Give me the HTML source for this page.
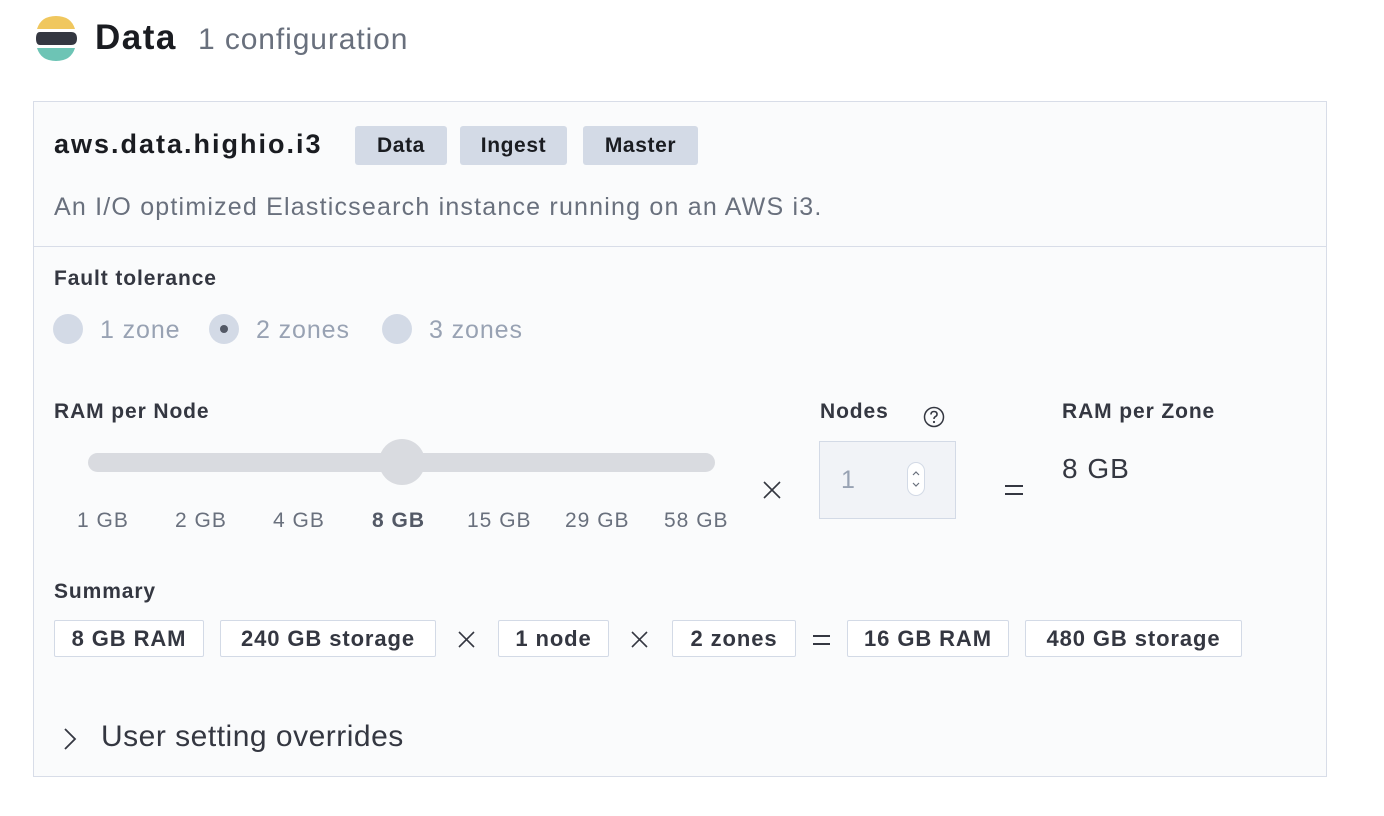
<!DOCTYPE html>
<html><head><meta charset="utf-8"><style>
body{margin:0;width:1384px;height:816px;background:#fff;font-family:"Liberation Sans",sans-serif;position:relative;overflow:hidden;color:#1a1c21}
.a{position:absolute;white-space:nowrap}
.card{position:absolute;left:33px;top:101px;width:1292px;height:674px;border:1px solid #d8dde8;background:#fafbfc}
.hd{position:absolute;left:33px;top:246px;width:1294px;height:1px;background:#d8dde8}
.bdg{position:absolute;top:126px;height:39px;background:#d3dae6;border-radius:3px;font-size:21px;letter-spacing:0.6px;font-weight:bold;line-height:39px;text-align:center;color:#1a1c21}
.rd{position:absolute;top:314px;width:30px;height:30px;border-radius:50%;background:#d3dae6}
.rt{position:absolute;top:315px;font-size:25px;letter-spacing:0.9px;line-height:30px;color:#98a2b3}
.lbl{position:absolute;font-size:21px;letter-spacing:0.9px;font-weight:bold;color:#343741}
.tk{position:absolute;top:509px;font-size:21px;letter-spacing:1px;color:#69707d}
.sb{position:absolute;top:620px;height:37px;border:1px solid #d3dae6;background:#fff;border-radius:2px;font-size:22px;letter-spacing:0.9px;font-weight:bold;line-height:35px;text-align:center;color:#343741;box-sizing:border-box}
.x{position:absolute}
</style></head><body>
<svg class="a" style="left:35px;top:15px" width="44" height="48" viewBox="0 0 44 48">
<path d="M2 14 Q6 1 21 1 Q36 1 40 14 Z" fill="#f0c75e"/>
<path d="M5 17 H36 Q42 17 42 23.5 Q42 30 36 30 H5 Q1 30 1 23.5 Q1 17 5 17Z" fill="#343741"/>
<path d="M2 33 H40 Q36 46 21 46 Q6 46 2 33Z" fill="#6dc4b5"/>
</svg>
<div class="a" style="left:95px;top:18px;font-size:35px;letter-spacing:1.5px;font-weight:bold;color:#1a1c21">Data</div>
<div class="a" style="left:198px;top:23px;font-size:30px;letter-spacing:0.9px;color:#69707d">1 configuration</div>
<div class="card"></div>
<div class="hd"></div>
<div class="a" style="left:54px;top:129px;font-size:27px;letter-spacing:2px;font-weight:bold;color:#1a1c21">aws.data.highio.i3</div>
<div class="bdg" style="left:355px;width:92px">Data</div>
<div class="bdg" style="left:460px;width:107px">Ingest</div>
<div class="bdg" style="left:583px;width:115px">Master</div>
<div class="a" style="left:54px;top:193px;font-size:25px;letter-spacing:1.2px;color:#69707d">An I/O optimized Elasticsearch instance running on an AWS i3.</div>
<div class="lbl" style="left:54px;top:267px">Fault tolerance</div>
<div class="rd" style="left:53px"></div><div class="rt" style="left:100px">1 zone</div>
<div class="rd" style="left:209px"><div style="position:absolute;left:11px;top:11px;width:8px;height:8px;border-radius:50%;background:#535966"></div></div><div class="rt" style="left:256px">2 zones</div>
<div class="rd" style="left:382px"></div><div class="rt" style="left:429px">3 zones</div>
<div class="lbl" style="left:54px;top:400px">RAM per Node</div>
<div class="a" style="left:88px;top:453px;width:627px;height:19px;border-radius:10px;background:#d9dbe0"></div>
<div class="a" style="left:379px;top:439px;width:46px;height:46px;border-radius:50%;background:#d9dbe0"></div>
<div class="tk" style="left:77px">1 GB</div>
<div class="tk" style="left:175px">2 GB</div>
<div class="tk" style="left:273px">4 GB</div>
<div class="tk" style="left:372px;font-weight:bold;color:#535966">8 GB</div>
<div class="tk" style="left:467px">15 GB</div>
<div class="tk" style="left:565px">29 GB</div>
<div class="tk" style="left:664px">58 GB</div>
<svg class="x" style="left:762px;top:480px" width="20" height="20"><path d="M2 2 L18 18 M18 2 L2 18" stroke="#343741" stroke-width="1.6"/></svg>
<div class="lbl" style="left:820px;top:400px">Nodes</div>
<svg class="a" style="left:923px;top:406px" width="22" height="22" viewBox="0 0 22 22"><circle cx="11" cy="11" r="9.5" fill="none" stroke="#343741" stroke-width="1.5"/><path d="M8 8.5 Q8 5.5 11 5.5 Q14 5.5 14 8.3 Q14 10 11.8 11 Q11 11.5 11 13" fill="none" stroke="#343741" stroke-width="1.6"/><circle cx="11" cy="16" r="1.1" fill="#343741"/></svg>
<div class="a" style="left:819px;top:441px;width:135px;height:76px;background:#f1f3f7;border:1px solid #d3dae6"></div>
<div class="a" style="left:841px;top:466px;font-size:25px;color:#98a2b3">1</div>
<svg class="a" style="left:906px;top:462px" width="20" height="34" viewBox="0 0 20 34"><rect x="1.5" y="0.5" width="17" height="33" rx="8.5" fill="#fff" stroke="#d3dae6"/><path d="M7 13 L10 10 L13 13 M7 21 L10 24 L13 21" fill="none" stroke="#69707d" stroke-width="1.2"/></svg>
<svg class="x" style="left:1005px;top:484px" width="18" height="12"><path d="M0 2 H18 M0 10 H18" stroke="#343741" stroke-width="2"/></svg>
<div class="lbl" style="left:1062px;top:400px">RAM per Zone</div>
<div class="a" style="left:1062px;top:453px;font-size:28px;letter-spacing:1px;color:#343741">8 GB</div>
<div class="lbl" style="left:54px;top:580px">Summary</div>
<div class="sb" style="left:54px;width:150px">8 GB RAM</div>
<div class="sb" style="left:220px;width:216px">240 GB storage</div>
<svg class="x" style="left:457px;top:630px" width="19" height="19"><path d="M2 2 L17 17 M17 2 L2 17" stroke="#343741" stroke-width="1.6"/></svg>
<div class="sb" style="left:498px;width:111px">1 node</div>
<svg class="x" style="left:630px;top:630px" width="19" height="19"><path d="M2 2 L17 17 M17 2 L2 17" stroke="#343741" stroke-width="1.6"/></svg>
<div class="sb" style="left:672px;width:124px">2 zones</div>
<svg class="x" style="left:813px;top:634px" width="17" height="12"><path d="M0 2 H17 M0 10 H17" stroke="#343741" stroke-width="2"/></svg>
<div class="sb" style="left:847px;width:162px">16 GB RAM</div>
<div class="sb" style="left:1025px;width:217px">480 GB storage</div>
<svg class="a" style="left:62px;top:727px" width="16" height="24" viewBox="0 0 16 24"><path d="M3 2 L13 12 L3 22" fill="none" stroke="#343741" stroke-width="1.8"/></svg>
<div class="a" style="left:101px;top:720px;font-size:30px;letter-spacing:0.5px;color:#343741">User setting overrides</div>
</body></html>
